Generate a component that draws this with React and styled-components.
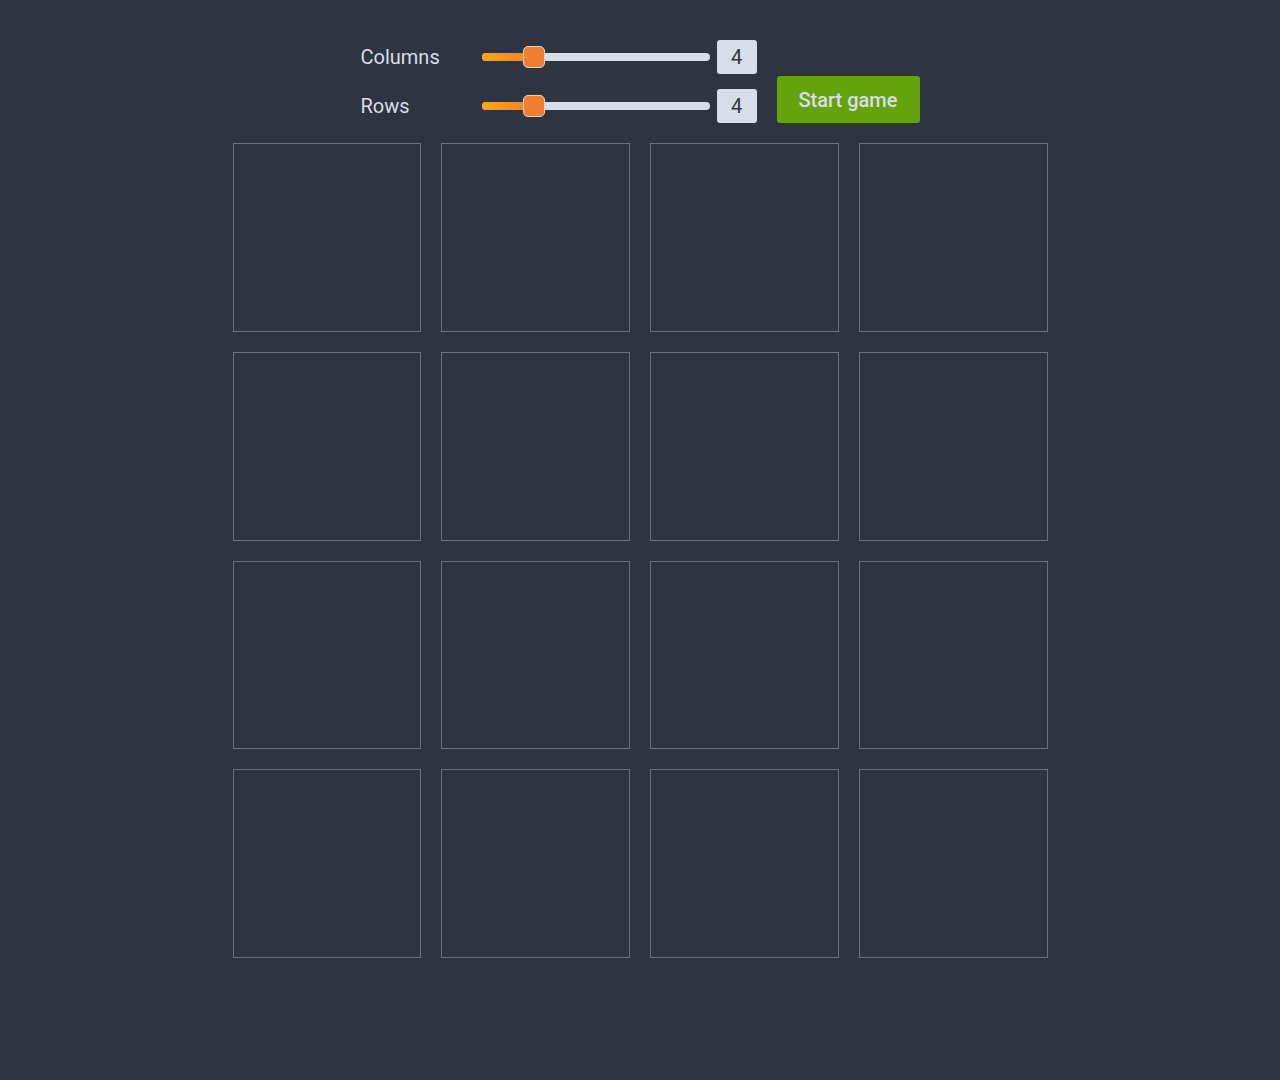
import React from "react";
import styled, { createGlobalStyle } from "styled-components";

const Global = createGlobalStyle`
  html, body { margin: 0; padding: 0; background: #2e3440; }
  body { font-family: Roboto, "Liberation Sans", sans-serif; color: #d8dee9; }
  * { box-sizing: border-box; }
`;

const Page = styled.div`
  min-height: 1080px;
  display: flex;
  flex-direction: column;
  align-items: center;
  padding-top: 40px;
`;

const Controls = styled.div`
  display: flex;
  align-items: flex-end;
  gap: 20px;
`;

const SliderGroup = styled.div`
  display: flex;
  flex-direction: column;
  gap: 15px;
`;

const SliderRow = styled.div`
  display: flex;
  align-items: center;
`;

const Label = styled.span`
  width: 121px;
  font-size: 20px;
  color: #d8dee9;
`;

const Track = styled.div`
  position: relative;
  width: 228px;
  height: 8px;
  border-radius: 4px;
  background: #d8dee9;
`;

const Fill = styled.div`
  position: absolute;
  left: 0;
  top: 0;
  bottom: 0;
  border-radius: 4px 0 0 4px;
  background: linear-gradient(90deg, #fba51d, #ee7f2d);
`;

const Thumb = styled.div`
  position: absolute;
  top: 50%;
  width: 22px;
  height: 22px;
  margin-top: -11px;
  border-radius: 5px;
  background: #ef7f2e;
  border: 1px solid #e5d5cc;
`;

const ValueBox = styled.div`
  width: 40px;
  height: 34px;
  margin-left: 7px;
  border-radius: 3px;
  background: #d8dee9;
  color: #2e3440;
  font-size: 20px;
  display: flex;
  align-items: center;
  justify-content: center;
`;

const StartButton = styled.button`
  width: 143px;
  height: 47px;
  border: none;
  border-radius: 3px;
  background: #65a30d;
  color: #d8dee9;
  font-family: Roboto, "Liberation Sans", sans-serif;
  font-size: 20px;
  font-weight: 500;
  cursor: pointer;
  padding: 0;
`;

const Board = styled.div`
  margin-top: 20px;
  display: grid;
  grid-template-columns: repeat(${(p) => p.$cols}, 188.75px);
  grid-auto-rows: 188.75px;
  gap: 20px;
`;

const Cell = styled.div`
  border: 1px solid #6b707c;
`;

function Slider({ label, value, min, max }) {
  const frac = (value - min) / (max - min);
  const thumbLeft = frac * (228 - 22);
  return (
    <SliderRow>
      <Label>{label}</Label>
      <Track>
        <Fill style={{ width: thumbLeft + 11 }} />
        <Thumb style={{ left: thumbLeft }} />
      </Track>
      <ValueBox>{value}</ValueBox>
    </SliderRow>
  );
}

export default function App() {
  const cols = 4;
  const rows = 4;
  return (
    <>
      <Global />
      <Page>
        <Controls>
          <SliderGroup>
            <Slider label="Columns" value={cols} min={2} max={12} />
            <Slider label="Rows" value={rows} min={2} max={12} />
          </SliderGroup>
          <StartButton>Start game</StartButton>
        </Controls>
        <Board $cols={cols}>
          {Array.from({ length: cols * rows }).map((_, i) => (
            <Cell key={i} />
          ))}
        </Board>
      </Page>
    </>
  );
}
